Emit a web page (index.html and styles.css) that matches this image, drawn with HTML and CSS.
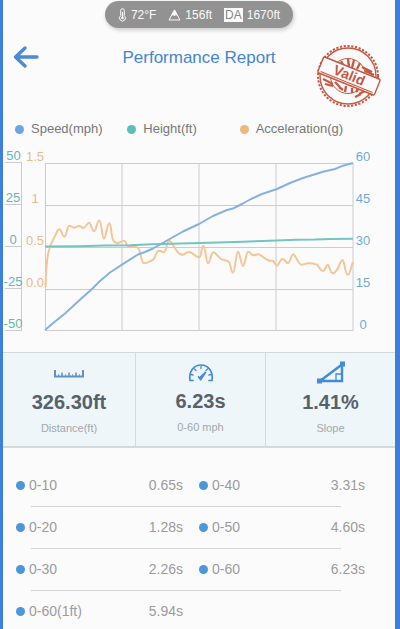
FILE: index.html
```html
<!DOCTYPE html>
<html lang="en">
<head>
<meta charset="utf-8">
<meta name="viewport" content="width=device-width, initial-scale=1">
<title>Performance Report</title>
<link rel="stylesheet" href="styles.css">
</head>
<body>
<main class="screen">
  <div class="conditions">
    <span class="condition">
      <svg width="9" height="14" viewBox="0 0 9 14" fill="none" stroke="currentColor"><path d="M2.7 7.6V2.5a1.8 1.8 0 0 1 3.6 0v5.1a3 3 0 1 1-3.6 0z"/><path d="M4.5 4v5" stroke-width="1.2"/><circle cx="4.5" cy="10" r="1.3" fill="currentColor" stroke="none"/></svg>
      72°F
    </span>
    <span class="condition">
      <svg width="13" height="12" viewBox="0 0 13 12" fill="none" stroke="currentColor"><path d="M6.5 1 12 11H1z"/><path d="M6.5 1 9.2 6.2 7.6 5.5 6.5 7 5.2 5.5 3.8 6.2z" fill="currentColor"/></svg>
      156ft
    </span>
    <span class="condition"><abbr class="badge">DA</abbr> 1670ft</span>
  </div>

  <header class="header">
    <button class="back" type="button" aria-label="Back">
      <svg width="26" height="22" viewBox="0 0 26 22" fill="none" stroke="currentColor" stroke-width="3.3" stroke-linecap="round" stroke-linejoin="round"><path d="M24 11H2.500M12 2 2.500 11l9.500 9"/></svg>
    </button>
    <h1 class="title">Performance Report</h1>
    <svg class="stamp" width="64" height="64" viewBox="0 0 64 64" fill="none" stroke="currentColor">
      <circle cx="31" cy="32" r="30" stroke-width="2" stroke-dasharray="2.200 1.600"/>
      <circle cx="31" cy="32" r="28" stroke-width="1.400"/>
      <circle cx="31" cy="32" r="17.500" stroke-width="1"/>
      <path d="M24 17l4 7M31 15l1 8M37 16l-2 8M43 19l-3 6M18 38l5 5M22 43l4 3M29 42l-1 6M35 44v5M41 45l-2 3" stroke-width="2.300"/>
      <path d="M45 23l10 5M48 27l9 4M6 35l10 5M8 40l8 2M42 50l8-4M38 53l6-3" stroke-width="2"/>
      <g transform="rotate(22 32 32)">
        <rect x="1.500" y="23.500" width="61" height="17" rx="1.500" fill="#fbfbfc" stroke-width="1.400"/>
        <path d="M4 38.500h56" stroke-width="1"/>
        <text class="stamp-text" x="32" y="36" text-anchor="middle">Valid</text>
      </g>
    </svg>
  </header>

  <ul class="legend">
    <li class="legend-item speed">Speed(mph)</li>
    <li class="legend-item height">Height(ft)</li>
    <li class="legend-item accel">Acceleration(g)</li>
  </ul>

  <section class="chart" aria-label="Speed, height and acceleration">
    <ol class="axis axis-height"><li>50</li><li>25</li><li>0</li><li>-25</li><li>-50</li></ol>
    <ol class="axis axis-accel"><li>1.5</li><li>1</li><li>0.5</li><li>0.0</li><li></li></ol>
    <svg class="plot" viewBox="45 163 308 168" preserveAspectRatio="none" fill="none">
      <path class="grid" d="M45 163.500H353M45 205.500H353M45 247.500H353M45 289.500H353M45 330.500H353M45.500 163V331M122 163V331M199 163V331M276 163V331M353 163V331"/>
      <path class="line line-accel" d="M45.5 287C46 272 46.500 262 48 254S51 243 54 238S57 229.300 59.300 229.300S62 236.700 64.300 236.700S67 225.700 69.300 225.700S72 227.700 74 227.700S77 226 79.300 226S81 228 83.300 228S87 222.700 89 222.700S92 231.300 94 231.300S97 220.500 99.300 220.500S102 238.700 104 238.700S107 223.300 109.300 223.300S111 240 114 241.500S116 243.300 117.500 243.300S122 240.700 124.300 240.700S126 246.700 129 246.700S136 246 138.300 248S141 263.300 144 263.300S150 261 152.700 260S156 250.700 158.700 250.700S162 252.300 164 252.300S167 240.700 169.300 240.700S175 250 178.300 252.700S181 254.700 182.700 254.700S186 252 189 252S196 257.300 199 257.300S201 246 203.300 246S206 263.300 208 263.300S211 252.300 213.300 252.300S219 258 221.700 259.300S226 260 228.300 261.300S231 272.700 233 272.700S236 251.700 238 251.700S241 266 243 266S246 251.700 248.300 251.700S251 255.300 253.300 255.300S256 254.300 258.300 254.300S265 259 268.300 260.300S272 260 273.300 261.300S276 265.700 277.300 265.700S280 259 282.700 259S286 263.300 288 263.300S291 254.300 293.300 254.300S298 264.700 301.700 264.700S305 263.300 308.300 263.300S314 263.500 316.700 264.700S320 271 322.700 271S326 264.700 327.700 264.700S330 273.300 332.700 273.300S337 270 338.300 267.300S341 260 342.700 260S345 274.700 347.700 274.700S351 266 353 262"/>
      <path class="line line-height" d="M45 246.500 80 246.200 105 245.500 130 245.300 152 244.300 180 243.500 200 243 243 241.700 277 240.500 296 239.700 315 239.500 330 239 353 238.800"/>
      <path class="line line-speed" d="M45 330 52 324 65 313.500 78 301.500 92 289 100 281 110 272.500 122 264.700 138 254.500 145 252 153 248.500 160 244.500 167 240.500 183 231.500 199 224 213 216 227 210 233 208.500 242 204 251 199 262 194 277 189 290 183 303 178 323 171.700 335 169 343 165.700 353 163"/>
    </svg>
    <ol class="axis axis-speed"><li>60</li><li>45</li><li>30</li><li>15</li><li>0</li></ol>
  </section>

  <section class="stats">
    <div class="stat">
      <svg class="stat-icon" width="30" height="24" viewBox="0 0 30 24" fill="none" stroke="currentColor"><path d="M1 9v6.500h28V9" stroke-width="2"/><path d="M8 11.500V15M15 11.500V15M22 11.500V15" stroke-width="1.500"/><path d="M4.500 13v2M11.500 13v2M18.500 13v2M25.500 13v2" stroke-width=".7"/></svg>
      <strong class="stat-value">326.30ft</strong>
      <span class="stat-label">Distance(ft)</span>
    </div>
    <div class="stat stat-raised">
      <svg class="stat-icon" width="26" height="24" viewBox="0 0 26 24" fill="none" stroke="currentColor" stroke-linecap="round"><path d="M2 20.500C.5 11 6 5 13 5s12.500 6 11 15.500h-3M2 20.500h3" stroke-width="1.700"/><path d="M3 14.500l2 .5M6.500 9l1.500 1.500M13 6.500v2M19.500 9 18 10.500M23 14.500l-2 .5" stroke-width="1.300"/><path d="M10.500 17l2.200 2.500 5-7.500-5.800 5.500" stroke-width="1.700"/></svg>
      <strong class="stat-value">6.23s</strong>
      <span class="stat-label">0-60 mph</span>
    </div>
    <div class="stat">
      <svg class="stat-icon" width="28" height="24" viewBox="0 0 28 24" fill="none" stroke="currentColor"><path d="M3 20 25 3.500V20z" stroke-width="2.400"/><path d="M25 13h-6v7" stroke-width="1.300"/><path d="M0 17.500h5v5H0zM23 .5h5v5h-5z" fill="currentColor" stroke="none"/></svg>
      <strong class="stat-value">1.41%</strong>
      <span class="stat-label">Slope</span>
    </div>
  </section>

  <section class="splits" aria-label="Split times">
    <div class="split-row">
      <dl class="split"><dt>0-10</dt><dd>0.65s</dd></dl>
      <dl class="split"><dt>0-40</dt><dd>3.31s</dd></dl>
    </div>
    <div class="split-row">
      <dl class="split"><dt>0-20</dt><dd>1.28s</dd></dl>
      <dl class="split"><dt>0-50</dt><dd>4.60s</dd></dl>
    </div>
    <div class="split-row">
      <dl class="split"><dt>0-30</dt><dd>2.26s</dd></dl>
      <dl class="split"><dt>0-60</dt><dd>6.23s</dd></dl>
    </div>
    <div class="split-row">
      <dl class="split"><dt>0-60(1ft)</dt><dd>5.94s</dd></dl>
    </div>
  </section>
</main>
</body>
</html>
```
FILE: styles.css
```css
* {
  box-sizing: border-box;
}

body {
  margin: 0;
  background: #fbfbfc;
  font-family: "Liberation Sans", Arial, sans-serif;
}

h1, ul, ol, dl, dd {
  margin: 0;
  padding: 0;
  list-style: none;
}

svg {
  display: block;
  flex: none;
}

.screen {
  min-height: 100vh;
  padding-top: 1px;
  border-left: 3px solid #3f7fdc;
  border-right: 5px solid #3f7fdc;
  color: #777;
}

/* Weather conditions */
.conditions {
  display: flex;
  align-items: center;
  justify-content: center;
  gap: 12px;
  width: fit-content;
  height: 27px;
  margin: 0 auto;
  padding: 0 13px;
  border-radius: 14px;
  background: #929292;
  box-shadow: 1px 2px 4px #0003;
  color: #fafafa;
  font-size: 12px;
}

.condition {
  display: flex;
  align-items: center;
  gap: 4px;
}

.badge {
  padding: 0 1px;
  background: #fafafa;
  color: #888;
  line-height: 14px;
}

/* Header */
.header {
  display: grid;
  grid-template-columns: 1fr auto 1fr;
  align-items: start;
  height: 80px;
  margin-top: 14px;
  padding: 0 14px 0 10px;
}

.back {
  justify-self: start;
  margin-top: 4px;
  padding: 0;
  border: 0;
  background: none;
  color: #4a8ad6;
}

.title {
  padding-left: 4px;
  color: #4685cf;
  font-size: 17px;
  font-weight: 400;
  line-height: 32px;
}

.stamp {
  justify-self: end;
  margin-top: 2px;
  color: #c65843;
}

.stamp-text {
  fill: currentColor;
  stroke: none;
  font-size: 14px;
  font-weight: 700;
}

/* Legend */
.legend {
  display: grid;
  grid-template-columns: repeat(3, 1fr);
  padding: 0 43px 0 12px;
  font-size: 13px;
  line-height: 14px;
}

.legend-item {
  display: flex;
  align-items: center;
  gap: 7px;
}

.legend-item::before {
  content: "";
  width: 9px;
  height: 9px;
  border-radius: 50%;
  background: var(--series);
}

.speed { --series: #6ca5e2; }
.height { --series: #5bbfba; }
.accel { --series: #efb67d; }

/* Chart */
.chart {
  display: grid;
  grid-template-columns: 17px 23px 1fr 42px;
  align-items: end;
  margin-top: 13px;
  padding-left: 2px;
}

.axis {
  font-size: 13px;
  line-height: 13px;
}

.axis li {
  display: flex;
  align-items: flex-end;
  justify-content: center;
  height: 42px;
}

.axis li:first-child {
  height: 14px;
}

.axis-height {
  color: #5fb9b5;
}

.axis-height li {
  border-bottom: 1px solid #ccc;
}

.axis-height li + li {
  border-right: 1px solid #ccc;
}

.axis-accel {
  padding-left: 3px;
  color: #ecb98b;
}

.axis-speed {
  padding-right: 22px;
  color: #72aad6;
}

.plot {
  width: 100%;
  height: 168px;
  overflow: visible;
}

.plot path {
  vector-effect: non-scaling-stroke;
}

.grid {
  stroke: #ccc;
}

.line {
  stroke-width: 2px;
  stroke-linejoin: round;
}

.line-accel { stroke: #f3c696; }
.line-height { stroke: #72c5c0; }
.line-speed { stroke: #86b2e2; }

/* Summary figures */
.stats {
  display: grid;
  grid-template-columns: 132fr 130fr 130fr;
  height: 96px;
  margin-top: 21px;
  border-top: 1px solid #d3dadd;
  border-bottom: 2px solid #d3dadd;
  background: #eef6f9;
}

.stat {
  display: flex;
  flex-direction: column;
  align-items: center;
  padding-top: 8px;
}

.stat + .stat {
  border-left: 1px solid #d3dadd;
}

.stat-raised {
  padding-top: 7px;
}

.stat-icon {
  color: #438ada;
}

.stat:first-child .stat-icon {
  color: #5d92c8;
}

.stat-value {
  margin-top: 5px;
  color: #58626a;
  font-size: 20px;
  line-height: 24px;
}

.stat-label {
  margin-top: 8px;
  color: #a3a7aa;
  font-size: 11px;
  line-height: 12px;
}

/* Split times */
.splits {
  margin-top: 17px;
  color: #9c9c9c;
  font-size: 14px;
  line-height: 41px;
}

.split-row {
  display: grid;
  grid-template-columns: 167fr 166fr;
  column-gap: 16px;
  padding: 0 30px 0 13px;
}

.split-row:not(:last-child)::after {
  content: "";
  grid-column: 1 / -1;
  height: 1px;
  margin: 0 24px 0 15px;
  background: #d4d4d4;
}

.split {
  display: flex;
  justify-content: space-between;
}

.split dt {
  display: flex;
  align-items: center;
  gap: 4px;
}

.split dt::before {
  content: "";
  width: 9px;
  height: 9px;
  border-radius: 50%;
  background: #4b97d9;
}
```
